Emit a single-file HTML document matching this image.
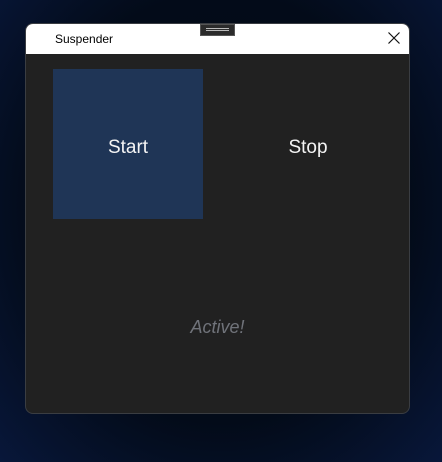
<!DOCTYPE html>
<html><head><style>
html,body{margin:0;padding:0;width:442px;height:462px;overflow:hidden}
body{background:radial-gradient(ellipse at 50% 45%,#030a16 0%,#030b19 60%,#08173a 100%);position:relative;font-family:"Segoe UI","Liberation Sans",sans-serif}
.win{position:absolute;left:25px;top:23px;width:385px;height:391px;border:1px solid #3a3d42;border-radius:8px;overflow:hidden;background:#212121;box-sizing:border-box}
.tb{position:absolute;left:0;top:0;right:0;height:30px;background:#fff}
.title{position:absolute;left:29px;top:8px;font-size:12px;color:#000}
.x{position:absolute;right:8px;top:7px}
.grip{position:absolute;left:200px;top:24px;width:35px;height:12px;background:#2b2b2b;border:1px solid #555;box-sizing:border-box}
.grip i{position:absolute;left:5px;right:5px;top:3px;height:1px;background:#bbb}
.grip i+i{top:5px}
.start{position:absolute;left:27px;top:45px;width:150px;height:150px;background:#1f3556;color:#f4f4f4;font-size:19px;display:flex;align-items:center;justify-content:center;padding-top:8px;box-sizing:border-box}
.stop{position:absolute;left:207px;top:45px;width:150px;height:150px;color:#f4f4f4;font-size:19px;display:flex;align-items:center;justify-content:center;padding-top:8px;box-sizing:border-box}
.act{position:absolute;left:0;right:0;top:293px;text-align:center;font-style:italic;font-size:18px;color:#70737a}
</style></head><body>
<div class="win">
<div class="tb"><div class="title">Suspender</div>
<svg class="x" width="14" height="14" viewBox="0 0 14 14"><path d="M1.5 1.5L12.5 12.5M12.5 1.5L1.5 12.5" stroke="#111" stroke-width="1.2"/></svg></div>
<div class="start">Start</div>
<div class="stop">Stop</div>
<div class="act">Active!</div>
</div>
<div class="grip"><i></i><i></i></div>
</body></html>
